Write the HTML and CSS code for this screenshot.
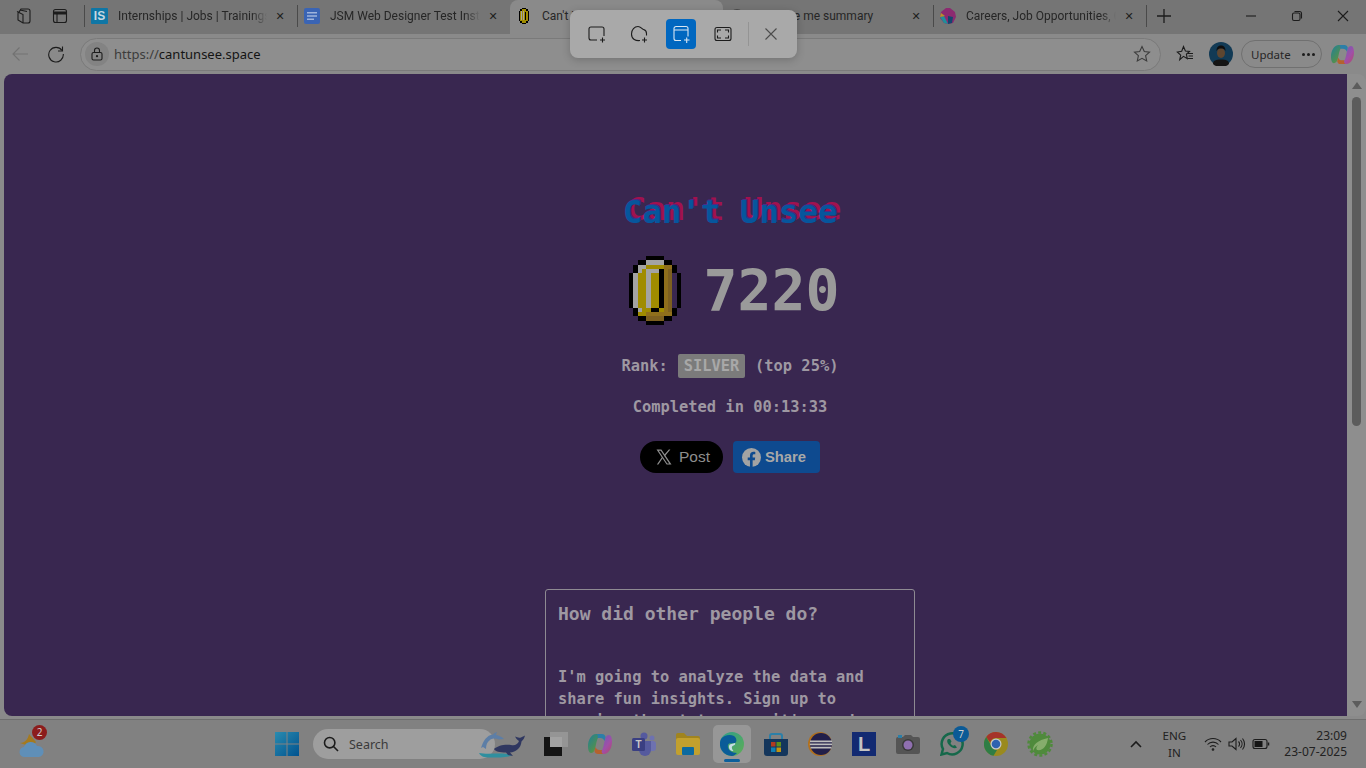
FILE: index.html
```html
<!DOCTYPE html>
<html lang="en">

<head>
    <meta charset="UTF-8">
    <meta name="viewport" content="width=device-width, initial-scale=1.0">
    <title>Can't Unsee</title>
    <link rel="stylesheet" href="styles.css">
</head>

<body>
    <svg class="defs" width="0" height="0">
        <defs>
            <linearGradient id="copilot-a" x1="0" y1="0" x2="1" y2="1">
                <stop offset="0" stop-color="#1f7f9a" />
                <stop offset="0.6" stop-color="#4f8f52" />
                <stop offset="1" stop-color="#a88f2a" />
            </linearGradient>
            <linearGradient id="copilot-b" x1="0" y1="0" x2="1" y2="1">
                <stop offset="0" stop-color="#5c63b8" />
                <stop offset="0.6" stop-color="#a04fa8" />
                <stop offset="1" stop-color="#b3486a" />
            </linearGradient>
            <linearGradient id="edge-a" x1="0" y1="0" x2="1" y2="1">
                <stop offset="0" stop-color="#2f9e8a" />
                <stop offset="1" stop-color="#5fae55" />
            </linearGradient>
            <linearGradient id="win-a" x1="0" y1="0" x2="1" y2="1">
                <stop offset="0" stop-color="#2a8cb0" />
                <stop offset="1" stop-color="#00528f" />
            </linearGradient>
        </defs>
    </svg>

    <div class="screen">
        <!-- tab strip -->
        <div class="tabstrip">
            <span class="strip-btn">
                <svg viewBox="0 0 18 18" width="18" height="18" class="ico">
                    <path d="M6 2h7a2 2 0 0 1 2 2v10a2 2 0 0 1-2 2H8l-5-3V7a2 2 0 0 1 1-2z" />
                    <path d="M2 4.500 8 7.500v8.500M5 3l7 1.500" />
                </svg>
            </span>
            <span class="strip-btn">
                <svg viewBox="0 0 18 18" width="18" height="18" class="ico">
                    <rect x="2.500" y="2.500" width="13" height="13" rx="2" />
                    <path d="M2.500 6h13" stroke-width="3" />
                    <path d="M6 6v9" />
                </svg>
            </span>
            <span class="sep"></span>

            <div class="tab">
                <span class="favicon fav-is">IS</span>
                <span class="tab-title">Internships | Jobs | Trainings</span>
                <span class="tab-close">&#x2715;</span>
            </div>
            <span class="sep"></span>
            <div class="tab">
                <svg class="favicon" viewBox="0 0 16 16" width="16" height="16">
                    <rect width="16" height="16" rx="2" fill="#3a64b4" />
                    <path d="M3 4h10v1.500H3zM3 7.200h10v1.500H3zM3 10.400h7v1.500H3z" fill="#9fb4dc" />
                </svg>
                <span class="tab-title">JSM Web Designer Test Instr</span>
                <span class="tab-close">&#x2715;</span>
            </div>
            <div class="tab tab-active">
                <svg class="favicon" viewBox="0 0 12 16" width="13" height="16" shape-rendering="crispEdges">
                    <path d="M4 0h4v16H4zM2 1h8v14H2zM1 3h10v10H1z" fill="#000" />
                    <path d="M4 1h4v14H4zM2 3h8v10H2z" fill="#a08c00" />
                    <path d="M3 3h1v9H3zM5 3h1v9H5z" fill="#a3a3a3" />
                    <path d="M7 4h1v8H7z" fill="#000" />
                </svg>
                <span class="tab-title tab-title-plain">Can't Unsee</span>
                <span class="tab-close">&#x2715;</span>
            </div>
            <div class="tab tab-narrow">
                <svg class="favicon" viewBox="0 0 16 16" width="16" height="16">
                    <circle cx="8" cy="8" r="7" fill="#4c4c4c" />
                </svg>
                <span class="tab-title tab-title-plain tab-title-end">Give me summary</span>
                <span class="tab-close">&#x2715;</span>
            </div>
            <span class="sep"></span>
            <div class="tab">
                <svg class="favicon" viewBox="0 0 16 16" width="16" height="16">
                    <path d="M6 0h4l5 4 1 5-3 6-5 1-4-1-4-5 1-6z" fill="#8c2a70" />
                    <path d="M0 9l4-1 4 8-4-1z" fill="#1f8f9a" />
                    <path d="M8 8l5 1-1 6-4 1z" fill="#14466e" />
                    <path d="M1 5l4 3-5 1z" fill="#b8912a" />
                </svg>
                <span class="tab-title">Careers, Job Opportunities, O</span>
                <span class="tab-close">&#x2715;</span>
            </div>
            <span class="sep"></span>
            <span class="new-tab">
                <svg viewBox="0 0 16 16" width="16" height="16" class="ico">
                    <path d="M8 1v14M1 8h14" stroke-width="1.300" />
                </svg>
            </span>

            <div class="win-controls">
                <svg viewBox="0 0 12 12" width="12" height="12" class="ico">
                    <path d="M1 6h10" />
                </svg>
                <svg viewBox="0 0 12 12" width="12" height="12" class="ico">
                    <rect x="1.500" y="3" width="7.500" height="7.500" rx="1.500" />
                    <path d="M3.500 1.500h5a2 2 0 0 1 2 2v5" />
                </svg>
                <svg viewBox="0 0 12 12" width="12" height="12" class="ico">
                    <path d="M1 1l10 10M11 1 1 11" />
                </svg>
            </div>
        </div>

        <!-- address bar row -->
        <div class="toolbar">
            <span class="tool-btn">
                <svg viewBox="0 0 18 18" width="18" height="18" class="ico ico-faint">
                    <path d="M17 9H2M8.500 2.500 2 9l6.500 6.500" />
                </svg>
            </span>
            <span class="tool-btn">
                <svg viewBox="0 0 18 18" width="18" height="18" class="ico">
                    <path d="M15 5.500A7.300 7.300 0 1 0 16.300 9" />
                    <path d="M15.500 1.500v4.500H11" />
                </svg>
            </span>
            <div class="address">
                <span class="lock">
                    <svg viewBox="0 0 14 14" width="14" height="14" class="ico">
                        <rect x="2" y="5.500" width="10" height="7.500" rx="1.500" />
                        <path d="M4.500 5.500V3.500a2.500 2.500 0 0 1 5 0v2" />
                        <circle cx="7" cy="9.200" r=".6" />
                    </svg>
                </span>
                <span class="url"><span class="url-scheme">https://</span>cantunsee.space</span>
                <svg class="ico ico-dim addr-star" viewBox="0 0 18 18" width="18" height="18">
                    <path d="M9 1.500 11.300 6.500l5.200.6-3.900 3.600 1.100 5.300L9 13.300 4.300 16l1.100-5.300L1.500 7.100l5.200-.6z" />
                </svg>
            </div>
            <span class="tool-btn tool-fav">
                <svg viewBox="0 0 18 18" width="18" height="18" class="ico">
                    <path d="M7.500 1.500 9.400 6l4.100.4-3.100 2.900.9 4.400-3.800-2.300L3.700 14.700l1-4.600L1.300 7l4.400-.8z" />
                    <path d="M12 8.500h5M12.500 11h4.500M11.500 13.500H17" />
                </svg>
            </span>
            <svg class="avatar" viewBox="0 0 24 24" width="24" height="24">
                <circle cx="12" cy="12" r="12" fill="#123a55" />
                <path d="M4 22c0-3.500 3-4.500 8-4.500s8 1 8 4.500a12 12 0 0 1-16 0z" fill="#141414" />
                <ellipse cx="12" cy="11" rx="4" ry="5" fill="#5e4630" />
                <path d="M7.500 9c0-4 2-5.500 4.500-5.500S16.500 5 16.500 9c-1-2-2.500-2.500-4.500-2.500S8.500 7 7.500 9z" fill="#0e0e0e" />
            </svg>
            <div class="update">
                <span>Update</span>
                <span class="dots"><i></i><i></i><i></i></span>
            </div>
            <svg class="copilot" viewBox="0 0 24 24" width="23" height="23">
                <path d="M8 2h6c-3 1-4.500 4-5.500 8L7 17c-.6 2.500-2 4-4 4-2 0-3-3-3-7 0-6 3.500-12 8-12z" fill="url(#copilot-a)" />
                <path d="M16 22h-6c3-1 4.500-4 5.500-8L17 7c.6-2.500 2-4 4-4 2 0 3 3 3 7 0 6-3.500 12-8 12z" fill="url(#copilot-b)" />
                <path d="M8 2h6c2 0 3 1 3.500 3l-1 4c-.8-2-2-3-4-3H9.500C10.500 3.500 9 2 8 2z" fill="#2b7fa8" />
                <path d="M16 22h-6c-2 0-3-1-3.500-3l1-4c.8 2 2 3 4 3h2.500c-1 2.500.5 4 2 4z" fill="#b4622e" />
            </svg>
        </div>

        <!-- page -->
        <div class="viewport">
            <main class="page">
                <h1 class="title">Can't Unsee</h1>
                <div class="score">
                    <svg class="coin" viewBox="0 0 12 16" width="52" height="69" shape-rendering="crispEdges">
                        <path d="M2 2h8v12H2z" fill="#a08c00" />
                        <path d="M8 2h2v12H8zM4 13h4v2H4z" fill="#8f6f1c" />
                        <path d="M9 3h1v10H9zM4 14h4v1H4z" fill="#7d6020" />
                        <path d="M4 1h4v1H4zM2 2h2v1H2zM2 3h1v1H2zM1 4h1v8H1zM2 12h1v1H2zM4 3h3v1H4zM4 4h1v8H4z" fill="#a3a3a3" />
                        <path d="M4 0h4v1H4zM2 1h2v1H2zM8 1h2v1H8zM1 2h1v2H1zM10 2h1v2h-1zM0 4h1v8H0zM11 4h1v8h-1zM1 12h1v2H1zM10 12h1v2h-1zM2 14h2v1H2zM8 14h2v1H8zM4 15h4v1H4zM7 3h1v9H7zM5 12h2v1H5z" fill="#000" />
                    </svg>
                    <span class="score-num">7220</span>
                </div>
                <p class="rank">Rank: <span class="badge">SILVER</span> (top 25%)</p>
                <p class="time">Completed in 00:13:33</p>
                <div class="share">
                    <a class="btn-x">
                        <svg viewBox="0 0 24 24" width="18" height="18">
                            <path d="M2 2h6.500l13.500 20h-6.500zM5 3.500 16.300 20.500h2.700L7.700 3.500z" fill="#8e8e8e" fill-rule="evenodd" />
                            <path d="M20.500 2h-2l-6.700 7.700 1 1.500zM10.600 13l-1-1.500L2.500 22h2z" fill="#8e8e8e" />
                        </svg>
                        Post
                    </a>
                    <a class="btn-fb">
                        <svg viewBox="0 0 20 20" width="19" height="19">
                            <circle cx="10" cy="10" r="10" fill="#a3a3a3" />
                            <path d="M8.400 20v-7H6v-3h2.400V7.800c0-2.500 1.500-3.800 3.700-3.800 1 0 1.900.2 1.900.2v2.500h-1.200c-1.200 0-1.600.7-1.600 1.500V10h2.700l-.4 3h-2.300v7z" fill="#0e4a8f" />
                        </svg>
                        Share
                    </a>
                </div>
                <section class="card">
                    <h2>How did other people do?</h2>
                    <p>I'm going to analyze the data and share fun insights. Sign up to receive the stats once it's ready.</p>
                </section>
            </main>
            <div class="scrollbar">
                <span class="sb-arrow"></span>
                <span class="sb-thumb"></span>
                <span class="sb-arrow sb-arrow-down"></span>
            </div>
        </div>

        <!-- taskbar -->
        <footer class="taskbar">
            <div class="weather">
                <svg viewBox="0 0 28 26" width="28" height="26">
                    <path d="M2 11c4 0 8-3 9-9l7 8-4 5z" fill="#a57a1f" />
                    <path d="M7 25a5 5 0 0 1-1-10 7 7 0 0 1 13-1 5.500 5.500 0 0 1 2 11z" fill="#5f8fb8" />
                </svg>
                <span class="weather-badge">2</span>
            </div>
            <div class="task-center">
                <svg class="win-logo" viewBox="0 0 24 24" width="24" height="24">
                    <path d="M0 0h11.500v11.500H0zM12.500 0H24v11.500H12.500zM0 12.500h11.500V24H0zM12.500 12.500H24V24H12.500z" fill="url(#win-a)" />
                </svg>
                <div class="search">
                    <svg viewBox="0 0 16 16" width="16" height="16" class="ico ico-thick">
                        <circle cx="6.700" cy="6.700" r="5.200" />
                        <path d="M10.500 10.500 15 15" />
                    </svg>
                    <span>Search</span>
                </div>
                <svg class="whales" viewBox="0 0 50 28" width="50" height="28">
                    <path d="M1 22c9 2 24-1 33 2-4 3-22 3-28 2-2-.5-4-2-5-4z" fill="#2f8f9f" />
                    <path d="M3 17C5 10 9 4 15 3.500c1-1 2-2 4-2.500l-1 3c3 .5 6 2 8 4l-5 .5c-3-1.500-7-1.500-9 .5-3 2-4 5-4 9l-3-2z" fill="#5d7ea6" />
                    <path d="M16 18c4-4 12-5 17-4 4 1 7-1 8-4-2-1-3-3-4-4.500 2 1 4 1.500 6 1 1-.5 3-1.500 4-2-.5 2.500-2 4.500-3.500 6-.5 6.500-5.500 10.500-11.500 11l3 3.500-5-1-2-2.500c-6 0-11-1-12-3.500z" fill="#2f3760" />
                </svg>
                <div class="apps">
                    <span class="app">
                        <svg viewBox="0 0 24 24" width="24" height="24">
                            <rect x="0" y="5" width="18" height="19" fill="#141414" />
                            <rect x="6" y="0" width="18" height="15" fill="#959595" />
                            <rect x="6" y="5" width="12" height="10" fill="#a2a2a2" />
                        </svg>
                    </span>
                    <span class="app">
                        <svg viewBox="0 0 24 24" width="24" height="24">
                            <path d="M8 2h6c-3 1-4.500 4-5.500 8L7 17c-.6 2.500-2 4-4 4-2 0-3-3-3-7 0-6 3.500-12 8-12z" fill="url(#copilot-a)" />
                            <path d="M16 22h-6c3-1 4.500-4 5.500-8L17 7c.6-2.500 2-4 4-4 2 0 3 3 3 7 0 6-3.500 12-8 12z" fill="url(#copilot-b)" />
                            <path d="M8 2h6c2 0 3 1 3.500 3l-1 4c-.8-2-2-3-4-3H9.500C10.500 3.500 9 2 8 2z" fill="#2b7fa8" />
                            <path d="M16 22h-6c-2 0-3-1-3.500-3l1-4c.8 2 2 3 4 3h2.500c-1 2.500.5 4 2 4z" fill="#b4622e" />
                        </svg>
                    </span>
                    <span class="app">
                        <svg viewBox="0 0 24 24" width="24" height="24">
                            <circle cx="12" cy="4" r="3.500" fill="#555a9e" />
                            <circle cx="20" cy="6" r="2.500" fill="#6e72b0" />
                            <rect x="13" y="9" width="11" height="10" rx="3" fill="#6e72b0" />
                            <path d="M7 9h12v9a6 6 0 0 1-12 0z" fill="#555a9e" />
                            <rect x="0" y="6" width="13" height="13" rx="1.500" fill="#3a3f82" />
                            <text x="6.500" y="16" class="svg-t" font-size="10">T</text>
                        </svg>
                    </span>
                    <span class="app">
                        <svg viewBox="0 0 24 24" width="24" height="24">
                            <path d="M0 3a2 2 0 0 1 2-2h6l3 3h11a2 2 0 0 1 2 2v3H0z" fill="#a0841f" />
                            <rect y="6" width="24" height="17" rx="2" fill="#c2a02e" />
                            <rect x="6" y="15" width="12" height="8" rx="1" fill="#0c6aa0" />
                        </svg>
                    </span>
                    <span class="app app-active">
                        <svg viewBox="0 0 24 24" width="24" height="24">
                            <circle cx="12" cy="12" r="12" fill="url(#edge-a)" />
                            <path d="M12 24A12 12 0 0 1 1 7c3-4 9-5 13-3 3 2 3 6 1 7-3 1-6-1-7 2-1 4 3 8 9 8-1.500 1.500-3 3-5 3z" fill="#0a5c98" />
                            <path d="M13.500 19c-3 0-5-2-4.500-5 .6-2.500 4-2 6-3 .5 1 .2 2-1.500 2.500-1.500.5-2 1.500-1.500 3 .3 1 1 2 1.500 2.500z" fill="#c6dde4" />
                        </svg>
                    </span>
                    <span class="app">
                        <svg viewBox="0 0 24 24" width="24" height="24">
                            <path d="M6 7V4a2 2 0 0 1 2-2h8a2 2 0 0 1 2 2v3" fill="none" stroke="#2b7fa8" stroke-width="2" />
                            <path d="M0 7h24v14a3 3 0 0 1-3 3H3a3 3 0 0 1-3-3z" fill="#14365c" />
                            <path d="M7 10h4.500v4.500H7z" fill="#b33a20" />
                            <path d="M12.500 10H17v4.500h-4.500z" fill="#5d8f1c" />
                            <path d="M7 15.500h4.500V20H7z" fill="#0e7fb5" />
                            <path d="M12.500 15.500H17V20h-4.500z" fill="#c29410" />
                        </svg>
                    </span>
                    <span class="app">
                        <svg viewBox="0 0 24 24" width="24" height="24">
                            <circle cx="12" cy="12" r="12" fill="#b2701c" />
                            <circle cx="13" cy="12" r="11" fill="#221f4a" />
                            <path d="M2 8.500h22v1.800H2zM1.800 11.500h22.400v1.800H1.800zM2.500 14.700h21v1.800h-21z" fill="#bdbdbd" />
                        </svg>
                    </span>
                    <span class="app">
                        <span class="app-l">L</span>
                    </span>
                    <span class="app">
                        <svg viewBox="0 0 24 24" width="24" height="24">
                            <path d="M2 5h5l2-2h6l2 2h5a2 2 0 0 1 2 2v13a2 2 0 0 1-2 2H2a2 2 0 0 1-2-2V7a2 2 0 0 1 2-2z" fill="#555" />
                            <circle cx="12" cy="13" r="6" fill="#3a3a3a" />
                            <circle cx="12" cy="13" r="4.500" fill="#8f6fb0" />
                            <rect x="2" y="3" width="4" height="3" fill="#2b7fa8" />
                        </svg>
                    </span>
                    <span class="app">
                        <svg viewBox="0 0 24 24" width="24" height="24" fill="none">
                            <path d="M1.500 22.500 3 17a10.500 10.500 0 1 1 4 4z" stroke="#15684a" stroke-width="2.500" />
                            <path d="M8 7c-1.500 1.500-1 4 1.500 6.500S15 17 17 15.500l-2-2.500-2 .8c-1-.5-2-1.500-2.500-2.500l1-2L10 7z" fill="#15684a" />
                        </svg>
                        <span class="app-badge">7</span>
                    </span>
                    <span class="app">
                        <svg viewBox="0 0 24 24" width="24" height="24">
                            <circle cx="12" cy="12" r="12" fill="#9a8a1e" />
                            <path d="M12 0a12 12 0 0 1 10.400 6H12a6 6 0 0 0-5.800 4.500L2.200 5A12 12 0 0 1 12 0z" fill="#a5332a" />
                            <path d="M2.200 5l5.200 9A6 6 0 0 0 13 18l-3.500 5.800A12 12 0 0 1 2.200 5z" fill="#2f7d45" />
                            <circle cx="12" cy="12" r="5.500" fill="#c8c8c8" />
                            <circle cx="12" cy="12" r="4.300" fill="#2f62b0" />
                        </svg>
                    </span>
                    <span class="app">
                        <svg viewBox="0 0 26 26" width="26" height="26">
                            <circle cx="13" cy="13" r="10.500" fill="#4f8a3c" />
                            <circle cx="13" cy="13" r="11.500" fill="none" stroke="#4f8a3c" stroke-width="2.500" stroke-dasharray="3 2.200" />
                            <path d="M6 20c-1-6 5-11 15-13-1 8-5 13-11 12-1-1-1-3 1-5-2 1-4 3-5 6z" fill="#86ad6c" />
                        </svg>
                    </span>
                </div>
            </div>
            <div class="tray">
                <svg viewBox="0 0 12 8" width="12" height="8" class="ico ico-thick tray-chevron">
                    <path d="M1 7l5-5 5 5" />
                </svg>
                <div class="lang"><span>ENG</span><span>IN</span></div>
                <svg viewBox="0 0 18 14" width="18" height="14" class="ico">
                    <path d="M1 5a11 11 0 0 1 16 0M3.500 7.500a7.500 7.500 0 0 1 11 0M6 10a4 4 0 0 1 6 0" />
                    <circle cx="9" cy="12.500" r=".8" />
                </svg>
                <svg viewBox="0 0 18 14" width="18" height="14" class="ico">
                    <path d="M1 5h3l4-3.500v11L4 9H1z" />
                    <path d="M10.500 4.500a3.500 3.500 0 0 1 0 5M12.500 3a6 6 0 0 1 0 8M14.500 1.500a8.500 8.500 0 0 1 0 11" />
                </svg>
                <svg viewBox="0 0 18 12" width="18" height="12" class="ico">
                    <rect x="1" y="1.500" width="14" height="9" rx="2" />
                    <rect x="2.500" y="3" width="8" height="6" fill="#151515" stroke="none" />
                    <path d="M16.500 4.500v3" stroke-width="1.500" />
                </svg>
                <div class="clock"><span>23:09</span><span>23-07-2025</span></div>
            </div>
        </footer>

        <!-- snipping tool bar, sits over the browser -->
        <div class="snip">
            <span class="snip-btn">
                <svg viewBox="0 0 18 18" width="18" height="18" class="ico">
                    <path d="M9 15H3a2 2 0 0 1-2-2V4a2 2 0 0 1 2-2h11a2 2 0 0 1 2 2v7" />
                    <path d="M12 15h5M14.500 12.500v5" />
                </svg>
            </span>
            <span class="snip-btn">
                <svg viewBox="0 0 18 18" width="18" height="18" class="ico">
                    <path d="M10 15.500c-4 .5-8.500-1-8.500-6.500C1.500 4.500 4.500 1.500 8 1.500c3 0 3.500 2.500 5.500 3 2 .5 3 2 3 4v2" />
                    <path d="M12 15h5M14.500 12.500v5" />
                </svg>
            </span>
            <span class="snip-btn snip-active">
                <svg viewBox="0 0 18 18" width="18" height="18" class="ico ico-white">
                    <path d="M9 15.500H4a2 2 0 0 1-2-2v-10a2 2 0 0 1 2-2h10a2 2 0 0 1 2 2v8M2 5h14" />
                    <path d="M12 15h5.500M14.700 12.500v5.500" />
                </svg>
            </span>
            <span class="snip-btn">
                <svg viewBox="0 0 18 18" width="18" height="18" class="ico">
                    <rect x="1" y="2.500" width="16" height="13" rx="2" />
                    <path d="M3.500 7.500V5H7M11 5h3.500v2.500M14.500 10.500V13H11M7 13H3.500v-2.500" />
                </svg>
            </span>
            <span class="snip-line"></span>
            <span class="snip-btn snip-close">
                <svg viewBox="0 0 12 12" width="12" height="12" class="ico ico-soft">
                    <path d="M.5.500l11 11M11.500.500l-11 11" />
                </svg>
            </span>
        </div>
    </div>
</body>

</html>
```

FILE: styles.css
```css
/* Whole desktop, everything is dimmed by the snipping overlay */
* {
    box-sizing: border-box;
}

body {
    margin: 0;
    background-color: #808080;
    font-family: 'Noto Sans', sans-serif;
    color: #222;
}

.defs {
    position: absolute;
}

.screen {
    position: relative;
    display: flex;
    flex-direction: column;
    width: 1366px;
    height: 768px;
    overflow: hidden;
}

.ico {
    flex: none;
    fill: none;
    stroke: #1c1c1c;
    stroke-width: 1.100;
}

.ico-faint {
    stroke: #727272;
}

.ico-dim {
    stroke: #3c3c3c;
}

.ico-thick {
    stroke-width: 1.600;
}

.ico-white {
    stroke: #d8e6f2;
}

.ico-soft {
    stroke: #4c4c4c;
}

/* Tab strip */
.tabstrip {
    display: flex;
    align-items: center;
    height: 34px;
    flex: none;
    padding: 0 0 2px 6px;
    background-color: #757575;
}

.strip-btn {
    display: flex;
    justify-content: center;
    width: 36px;
}

.sep {
    flex: none;
    width: 1px;
    height: 22px;
    background-color: #4a4a4a;
}

.tabstrip > .sep:nth-child(3) {
    margin-left: 6px;
}

.tab {
    display: flex;
    align-items: center;
    flex: none;
    width: 212px;
    height: 32px;
    padding: 0 10px 0 6px;
    font-family: 'Roboto', sans-serif;
    font-size: 12px;
    color: #262626;
}

.tab-active {
    width: 213px;
    height: 34px;
    margin-bottom: -2px;
    padding-left: 7px;
    padding-bottom: 2px;
    background-color: #8a8a8a;
    border-radius: 8px 8px 0 0;
}

.tab-narrow {
    width: 210px;
}

.favicon {
    flex: none;
    margin-right: 10px;
}

.fav-is {
    display: flex;
    align-items: center;
    justify-content: center;
    width: 17px;
    height: 16px;
    background-color: #0f76a5;
    border-radius: 1px;
    color: #c5d9e2;
    font-family: 'Liberation Sans', sans-serif;
    font-weight: bold;
    font-size: 12px;
}

.tab-active .favicon {
    margin-right: 12px;
}

.tab-title {
    flex: 1;
    min-width: 0;
    white-space: nowrap;
    -webkit-mask-image: linear-gradient(to right, #000 90%, transparent);
    mask-image: linear-gradient(to right, #000 90%, transparent);
}

.tab-title-plain {
    -webkit-mask-image: none;
    mask-image: none;
}

.tab-title-end {
    padding-left: 22px;
}

.tab-close {
    flex: none;
    width: 14px;
    margin-left: 6px;
    text-align: center;
    font-size: 11px;
    font-family: 'DejaVu Sans', sans-serif;
    color: #1e1e1e;
}

.new-tab {
    display: flex;
    margin-left: 9px;
}

.win-controls {
    display: flex;
    align-items: center;
    gap: 34px;
    margin-left: auto;
    padding-right: 17px;
}

/* Address bar */
.toolbar {
    display: flex;
    align-items: center;
    flex: none;
    height: 38px;
    padding: 2px 0 0 2px;
    background-color: #8a8a8a;
}

.tool-btn {
    display: flex;
    justify-content: center;
    width: 36px;
}

.address {
    display: flex;
    align-items: center;
    width: 1081px;
    height: 33px;
    margin-left: 6px;
    padding: 0 9px 0 4px;
    border: 1px solid #7a7a7a;
    border-radius: 17px;
    background-color: #8e8e8e;
}

.lock {
    display: flex;
    align-items: center;
    justify-content: center;
    width: 24px;
    height: 24px;
    border-radius: 50%;
    background-color: #838383;
}

.url {
    margin-left: 5px;
    font-size: 13px;
    color: #141414;
}

.url-scheme {
    color: #3c3c3c;
}

.addr-star {
    margin-left: auto;
}

.tool-fav {
    margin-left: 6px;
}

.avatar {
    margin-left: 6px;
}

.update {
    display: flex;
    align-items: center;
    gap: 11px;
    width: 81px;
    height: 28px;
    margin-left: 8px;
    padding-left: 9px;
    border: 1px solid #707070;
    border-radius: 14px;
    font-size: 11.500px;
    color: #262626;
}

.dots {
    display: flex;
    gap: 2px;
}

.dots i {
    width: 3px;
    height: 3px;
    border-radius: 50%;
    background-color: #1c1c1c;
}

.copilot {
    margin-left: 9px;
}

/* Page area */
.viewport {
    display: flex;
    flex: none;
    height: 648px;
    padding: 2px 0 3px 4px;
    background-color: #8a8a8a;
    border-bottom: 1px solid #6e6e6e;
}

.page {
    display: flex;
    flex-direction: column;
    align-items: center;
    flex: 1;
    min-width: 0;
    padding: 119px 0 0 109px;
    overflow: hidden;
    background-color: #392750;
    border-radius: 8px 0 0 8px;
    font-family: 'DejaVu Sans Mono', monospace;
    font-weight: bold;
    color: #9e98a2;
}

.title {
    margin: 0;
    font-size: 32.400px;
    line-height: 38px;
    color: #06569c;
    text-shadow: 1px -1px 0 #4d2a88, 4px -3px 0 #a2114f;
}

.score {
    display: flex;
    align-items: center;
    gap: 22px;
    margin-top: 25px;
    padding-left: 9px;
}

.coin {
    display: block;
}

.score-num {
    padding-top: 2px;
    font-size: 56.500px;
    line-height: 67px;
    color: #9a9a9a;
}

.rank {
    margin: 29px 0 0;
    font-size: 15.400px;
    line-height: 24px;
}

.badge {
    display: inline-block;
    padding: 0 5.500px;
    margin: 0 1px;
    background-color: #7b7b7b;
    border-radius: 2px;
    color: #a8a8a8;
}

.time {
    margin: 17px 0 0;
    font-size: 15.400px;
    line-height: 24px;
}

.share {
    display: flex;
    gap: 10px;
    margin-top: 22px;
    font-family: 'Liberation Sans', sans-serif;
}

.btn-x {
    display: flex;
    align-items: center;
    gap: 6px;
    height: 32px;
    padding: 0 13px 0 15px;
    background-color: #000;
    border-radius: 16px;
    font-weight: normal;
    font-size: 15.500px;
    color: #8e8e8e;
}

.btn-fb {
    display: flex;
    align-items: center;
    gap: 4px;
    height: 32px;
    padding: 0 14px 0 9px;
    background-color: #0e4a8f;
    border-radius: 4px;
    font-size: 14.800px;
    color: #a8a8a8;
}

.card {
    flex: none;
    width: 370px;
    margin-top: 116px;
    padding: 12px;
    border: 1px solid #8e8a92;
    border-radius: 3px;
}

.card h2 {
    margin: 0;
    font-size: 18px;
    line-height: 24px;
}

.card p {
    margin: 40px 0 0;
    font-size: 15.400px;
    line-height: 22px;
}

.scrollbar {
    display: flex;
    flex-direction: column;
    align-items: center;
    flex: none;
    width: 19px;
    padding: 8px 0;
    background-color: #8e8e8e;
    border-radius: 0 8px 8px 0;
}

.sb-arrow {
    width: 0;
    height: 0;
    border-left: 5px solid transparent;
    border-right: 5px solid transparent;
    border-bottom: 7px solid #5c5c5c;
}

.sb-arrow-down {
    margin-top: auto;
    border-bottom: 0;
    border-top: 7px solid #5c5c5c;
}

.sb-thumb {
    width: 9px;
    height: 329px;
    margin-top: 8px;
    background-color: #5c5c5c;
    border-radius: 5px;
}

/* Taskbar */
.taskbar {
    position: relative;
    display: flex;
    align-items: center;
    flex: 1;
    padding: 0 19px 0 18px;
    background-color: #818181;
}

.weather {
    position: relative;
    display: flex;
    margin-top: 2px;
}

.weather-badge {
    position: absolute;
    top: -7px;
    right: -1px;
    width: 15px;
    height: 15px;
    border-radius: 50%;
    background-color: #8c1c1c;
    color: #cfcfcf;
    font-size: 10px;
    line-height: 15px;
    text-align: center;
}

.task-center {
    display: flex;
    align-items: center;
    margin-left: 229px;
}

.search {
    display: flex;
    align-items: center;
    gap: 10px;
    width: 182px;
    height: 30px;
    margin-left: 14px;
    padding-left: 10px;
    background-color: #9e9e9e;
    border-radius: 15px;
    font-size: 12.500px;
    color: #3a3a3a;
}

.whales {
    margin-left: -17px;
    margin-top: 2px;
    position: relative;
}

.apps {
    display: flex;
    align-items: center;
    margin-left: 6px;
}

.app {
    position: relative;
    display: flex;
    align-items: center;
    justify-content: center;
    width: 44px;
    height: 38px;
}

.app-active {
    width: 38px;
    margin: 0 3px;
    background-color: #979797;
    border-radius: 5px;
}

.app-active::after {
    content: "";
    position: absolute;
    left: 11px;
    right: 11px;
    bottom: 1px;
    height: 3px;
    border-radius: 2px;
    background-color: #0c5f9c;
}

.app-l {
    display: flex;
    align-items: center;
    justify-content: center;
    width: 24px;
    height: 24px;
    background-color: #122a72;
    color: #c4c4c4;
    font-family: 'Liberation Sans', sans-serif;
    font-weight: bold;
    font-size: 20px;
}

.app-badge {
    position: absolute;
    top: 1px;
    right: 5px;
    width: 16px;
    height: 16px;
    border-radius: 50%;
    background-color: #0b5a96;
    color: #cfcfcf;
    font-size: 10px;
    line-height: 16px;
    text-align: center;
}

.svg-t {
    fill: #c8c8c8;
    font-family: 'Liberation Sans', sans-serif;
    font-weight: bold;
    text-anchor: middle;
}

.tray {
    display: flex;
    align-items: center;
    margin-left: auto;
    font-size: 11.600px;
    color: #222;
}

.tray-chevron {
    margin-right: 13px;
}

.lang {
    display: flex;
    flex-direction: column;
    align-items: center;
    width: 38px;
    margin-right: 11px;
    line-height: 17px;
}

.tray svg + svg {
    margin-left: 6px;
}

.clock {
    display: flex;
    flex-direction: column;
    align-items: flex-end;
    margin-left: 14px;
    font-size: 12px;
    line-height: 16px;
}

/* Snipping bar */
.snip {
    position: absolute;
    top: 10px;
    left: 570px;
    display: flex;
    align-items: center;
    width: 227px;
    height: 48px;
    padding-left: 12px;
    background-color: #a9a9a9;
    border-radius: 8px;
    box-shadow: 0 2px 8px rgba(0, 0, 0, 0.2);
}

.snip-btn {
    display: flex;
    flex: none;
    align-items: center;
    justify-content: center;
    width: 30px;
    height: 30px;
    margin-right: 12px;
    border-radius: 4px;
}

.snip-active {
    background-color: #0067c0;
}

.snip-line {
    flex: none;
    width: 1px;
    height: 24px;
    margin: 0 7px 0 -2px;
    background-color: #949494;
}

.snip-close {
    margin-right: 0;
}
```
